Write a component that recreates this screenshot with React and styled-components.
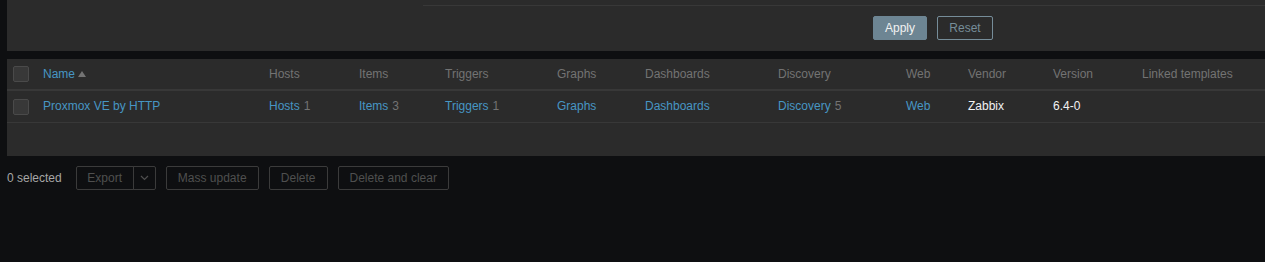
import React from "react";
import styled, { createGlobalStyle } from "styled-components";

const Global = createGlobalStyle`
  html, body { margin: 0; padding: 0; background: #0e0f11; }
  body { font-family: "Liberation Sans", Arial, sans-serif; font-size: 12px; color: #f2f2f2; overflow: hidden; }
`;

const Page = styled.div`
  padding-left: 7px;
  width: 1258px;
`;

const FilterPanel = styled.div`
  background: #2b2b2b;
  height: 51px;
  display: flex;
  flex-direction: column;
`;

const FilterTop = styled.div`
  height: 5px;
  margin-left: 416px;
  border-bottom: 1px solid #383838;
`;

const FilterButtons = styled.div`
  display: flex;
  gap: 10px;
  padding: 10px 0 0 866px;
`;

const Button = styled.button`
  font-family: inherit;
  font-size: 12px;
  height: 24px;
  padding: 0 11px;
  border-radius: 2px;
  cursor: pointer;
  box-sizing: border-box;
  background: ${(p) => (p.$primary ? "#6d8593" : "transparent")};
  color: ${(p) => (p.$primary ? "#f2f2f2" : "#768d99")};
  border: 1px solid ${(p) => (p.$primary ? "#6d8593" : "#768d99")};
  width: ${(p) => p.$w}px;
`;

const Table = styled.div`
  margin-top: 8px;
  background: #2b2b2b;
  height: 97px;
`;

const cols = "31px 226px 90px 86px 112px 88px 133px 128px 62px 85px 89px 1fr";

const Row = styled.div`
  display: grid;
  grid-template-columns: ${cols};
  align-items: center;
  height: ${(p) => (p.$header ? 30 : 31)}px;
  border-bottom: ${(p) => (p.$header ? "2px" : "1px")} solid #383838;
`;

const Cell = styled.div`
  padding-left: 5px;
  padding-bottom: ${(p) => (p.$head ? 0 : 2)}px;
  white-space: nowrap;
  color: ${(p) => (p.$head ? "#737373" : "#f2f2f2")};
`;

const CheckCell = styled.div`
  padding-left: 6px;
  display: flex;
  align-items: center;
`;

const Check = styled.span`
  display: inline-block;
  width: 16px;
  height: 16px;
  box-sizing: border-box;
  border: 1px solid #4a4a4a;
  border-radius: 2px;
  background: #383838;
`;

const Link = styled.a`
  color: #4796c4;
  text-decoration: none;
`;

const Count = styled.sup`
  vertical-align: baseline;
  font-size: 12px;
  color: #737373;
  margin-left: 4px;
`;

const SortArrow = styled.span`
  display: inline-block;
  width: 0;
  height: 0;
  margin-left: 3px;
  vertical-align: 1px;
  border-left: 4px solid transparent;
  border-right: 4px solid transparent;
  border-bottom: 6px solid #737373;
`;

const Footer = styled.div`
  display: flex;
  align-items: center;
  gap: 10px;
  padding-top: 10px;
`;

const Selected = styled.span`
  color: #a6a6a6;
  margin-right: 4px;
`;

const Disabled = styled.button`
  font-family: inherit;
  font-size: 12px;
  height: 24px;
  box-sizing: border-box;
  background: transparent;
  color: #4f4f4f;
  border: 1px solid #3b3b3b;
  border-radius: 2px;
  padding: 0;
  width: ${(p) => p.$w}px;
`;

const SplitGroup = styled.div`
  display: flex;
`;

const SplitMain = styled(Disabled)`
  border-radius: 2px 0 0 2px;
`;

const SplitToggle = styled(Disabled)`
  border-left: 1px solid #3b3b3b;
  border-radius: 0 2px 2px 0;
  margin-left: -1px;
  display: flex;
  align-items: center;
  justify-content: center;
`;

const headers = ["Hosts", "Items", "Triggers", "Graphs", "Dashboards", "Discovery", "Web", "Vendor", "Version", "Linked templates"];

export default function App() {
  return (
    <>
      <Global />
      <Page>
        <FilterPanel>
          <FilterTop />
          <FilterButtons>
            <Button $primary $w={54}>Apply</Button>
            <Button $w={56}>Reset</Button>
          </FilterButtons>
        </FilterPanel>
        <Table>
          <Row $header>
            <CheckCell><Check /></CheckCell>
            <Cell $head><Link href="#">Name</Link><SortArrow /></Cell>
            {headers.map((h) => (
              <Cell key={h} $head>{h}</Cell>
            ))}
          </Row>
          <Row>
            <CheckCell><Check /></CheckCell>
            <Cell><Link href="#">Proxmox VE by HTTP</Link></Cell>
            <Cell><Link href="#">Hosts</Link><Count>1</Count></Cell>
            <Cell><Link href="#">Items</Link><Count>3</Count></Cell>
            <Cell><Link href="#">Triggers</Link><Count>1</Count></Cell>
            <Cell><Link href="#">Graphs</Link></Cell>
            <Cell><Link href="#">Dashboards</Link></Cell>
            <Cell><Link href="#">Discovery</Link><Count>5</Count></Cell>
            <Cell><Link href="#">Web</Link></Cell>
            <Cell>Zabbix</Cell>
            <Cell>6.4-0</Cell>
            <Cell></Cell>
          </Row>
        </Table>
        <Footer>
          <Selected>0 selected</Selected>
          <SplitGroup>
            <SplitMain $w={58}>Export</SplitMain>
            <SplitToggle $w={23}>
              <svg width="9" height="6" viewBox="0 0 9 6">
                <path d="M1 1l3.5 3.5L8 1" fill="none" stroke="#4f4f4f" strokeWidth="1.2" />
              </svg>
            </SplitToggle>
          </SplitGroup>
          <Disabled $w={93}>Mass update</Disabled>
          <Disabled $w={59}>Delete</Disabled>
          <Disabled $w={111}>Delete and clear</Disabled>
        </Footer>
      </Page>
    </>
  );
}
